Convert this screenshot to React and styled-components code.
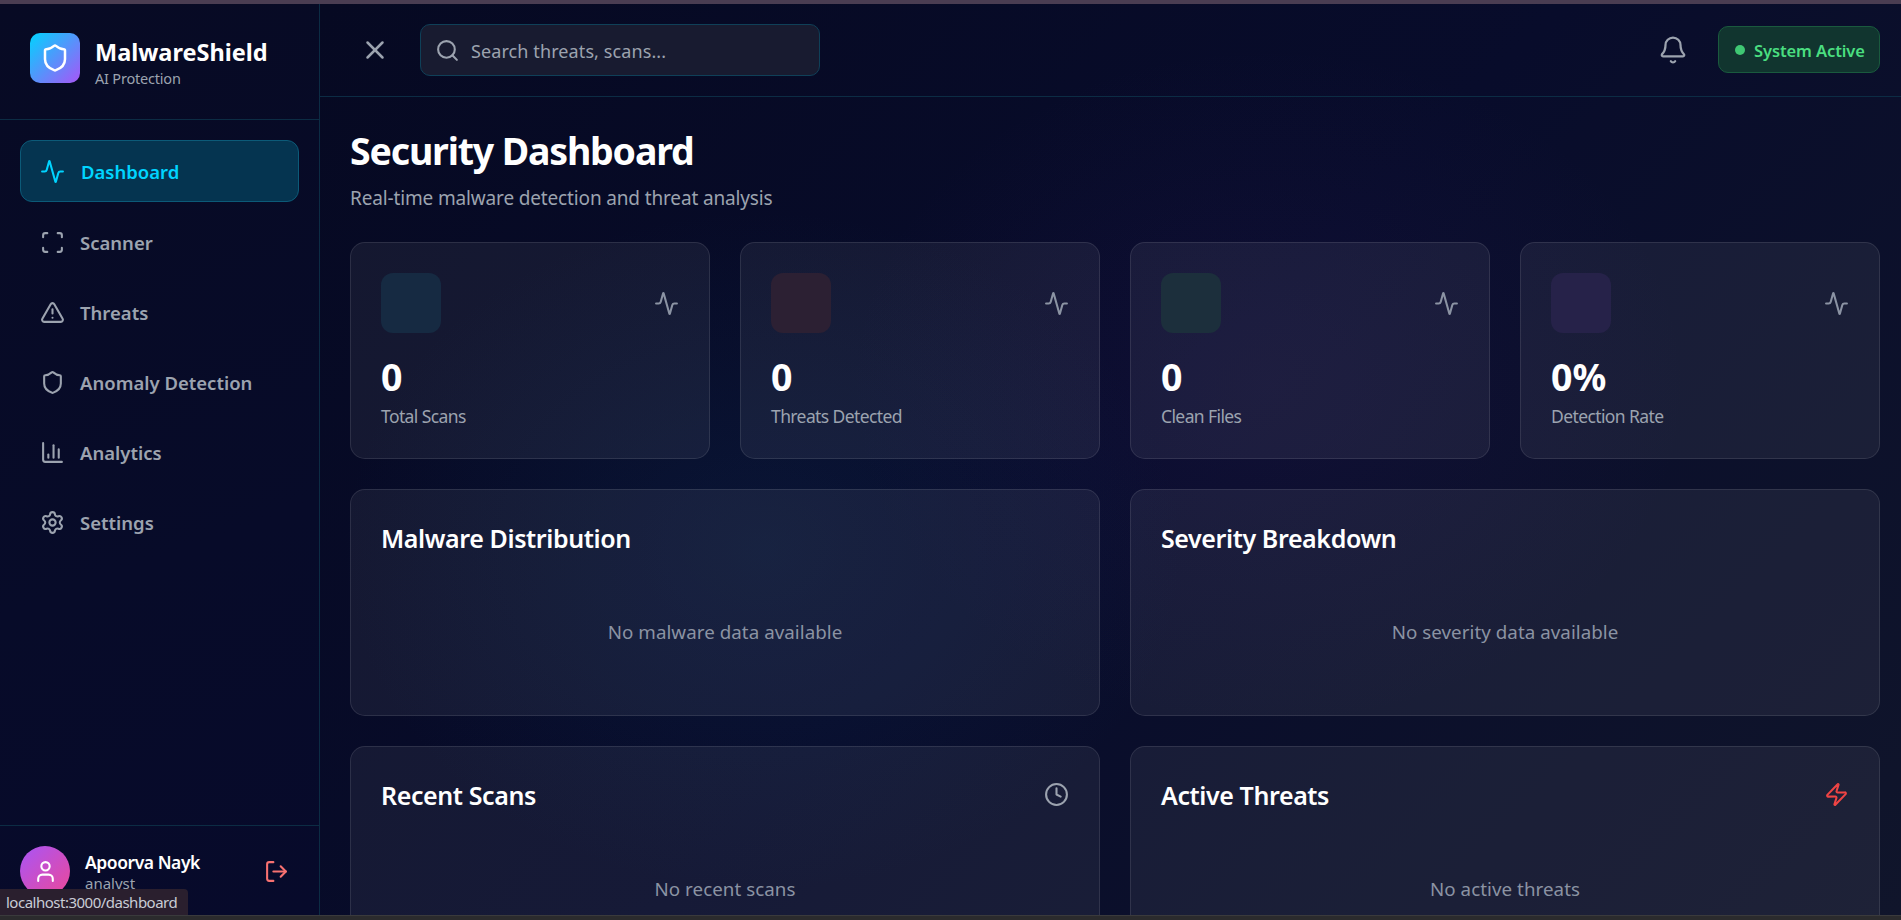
import React from "react";
import styled, { createGlobalStyle } from "styled-components";
import { Activity, Scan, TriangleAlert, Shield, ChartColumn, Settings, LogOut, User, Bell, Search, X, Clock, Zap } from "lucide-react";

const Global = createGlobalStyle`
  html, body { margin: 0; height: 100%; overflow: hidden; background: #060924; }
  body { font-family: "Noto Sans", "Open Sans", sans-serif; color: #fff; }
  * { box-sizing: border-box; }
`;
const Page = styled.div`
  position: relative; height: 920px; display: flex; flex-direction: column; overflow: hidden;
  background: #060924;
`;
const TopStrip = styled.div` height: 4px; flex: none; background: #4a3d52; `;
const BottomStrip = styled.div` height: 5px; flex: none; background: #2b2b2d; border-top: 1px solid #3a3a3c; `;
const Shell = styled.div` flex: 1; min-height: 0; display: flex; `;
const Sidebar = styled.aside`
  width: 320px; flex: none; display: flex; flex-direction: column;
  border-right: 1px solid #0c2c44;
  background: linear-gradient(160deg, #070a24 0%, #070b29 60%, #070a2b 100%);
`;
const Brand = styled.div`
  height: 116px; flex: none; display: flex; align-items: center; gap: 15px; padding: 0 30px 8px;
  border-bottom: 1px solid #0c2c44;
`;
const LogoTile = styled.div`
  width: 50px; height: 50px; border-radius: 10px; display: flex; align-items: center; justify-content: center;
  background: linear-gradient(135deg, #00d4ff 0%, #a855f7 100%);
`;
const BrandText = styled.div` padding-top: 11px; `;
const BrandName = styled.div` font-size: 23.5px; font-weight: 700; line-height: 30px; `;
const BrandSub = styled.div` font-size: 14.5px; line-height: 22px; color: #9ca3af; letter-spacing: -0.2px; `;
const Nav = styled.nav` flex: 1; padding: 20px; display: flex; flex-direction: column; gap: 8px; `;
const NavItem = styled.div`
  height: 62px; display: flex; align-items: center; gap: ${p => p.$active ? 16 : 15}px;
  padding: ${p => p.$active ? 0 : 3}px 19px 0;
  border-radius: 12px; border: 1px solid ${p => p.$active ? "#0c5a78" : "transparent"};
  background: ${p => p.$active ? "#053450" : "transparent"};
  color: ${p => p.$active ? "#00d4ff" : "#9ca3af"};
  font-size: 18.5px; font-weight: 600;
`;
const Footer = styled.div`
  height: 90px; flex: none; display: flex; align-items: flex-start; padding: 20px 20px 0; gap: 15px;
  border-top: 1px solid #0c2c44;
`;
const Avatar = styled.div`
  width: 50px; height: 50px; border-radius: 50%; flex: none; display: flex; align-items: center; justify-content: center;
  background: linear-gradient(135deg, #a855f7 0%, #ec4899 100%);
`;
const UserInfo = styled.div` flex: 1; `;
const UserName = styled.div` font-size: 17.5px; font-weight: 600; line-height: 22px; letter-spacing: -0.45px; margin-top: 5px; `;
const UserRole = styled.div` font-size: 15px; line-height: 21px; color: #9ca3af; `;
const LogoutBtn = styled.div` color: #f87171; margin: 13px 10px 0 0; display: flex; `;
const StatusTip = styled.div`
  position: absolute; left: 0; bottom: 5px; height: 26px; width: 188px; padding: 0 6px;
  display: flex; align-items: center; white-space: nowrap;
  background: #2a1f2e; border-top-right-radius: 4px; color: #c9ccd6; font-size: 15px; letter-spacing: -0.5px;
`;
const Main = styled.main`
  flex: 1; min-width: 0; display: flex; flex-direction: column;
  background:
    radial-gradient(ellipse 420px 340px at 28% 60%, rgba(18, 62, 105, .2), transparent 100%),
    radial-gradient(ellipse 420px 340px at 60% 42%, rgba(82, 42, 140, .1), transparent 100%),
    linear-gradient(135deg, #060922 0%, #080c2b 50%, #10152b 100%);
`;
const Topbar = styled.header`
  height: 93px; flex: none; display: flex; align-items: center; padding: 0 21px 1px 40px;
  border-bottom: 1px solid #0c2c44;
`;
const CloseBtn = styled.div` color: #9ca3af; display: flex; margin-right: 30px; `;
const SearchBox = styled.div`
  width: 400px; height: 52px; display: flex; align-items: center; gap: 11px; padding: 2px 14px 0;
  border: 1px solid #0f4058; border-radius: 10px; background: #181b30; color: #9ca3af;
  font-size: 18px; letter-spacing: 0.1px;
`;
const Spacer = styled.div` flex: 1; `;
const BellBtn = styled.div` color: #9ca3af; display: flex; margin-right: 30px; `;
const StatusBadge = styled.div`
  width: 162px; height: 47px; display: flex; align-items: center; gap: 9px; padding: 1px 0 0 16px;
  border: 1px solid #1a5a3e; border-radius: 10px; background: #11352f; color: #4ade80;
  font-size: 16.5px; font-weight: 600; letter-spacing: -0.1px;
`;
const Dot = styled.span` width: 10px; height: 10px; border-radius: 50%; background: #3fc873; `;
const Content = styled.div` flex: 1; min-height: 0; overflow: hidden; padding: 31px 21px 0 30px; `;
const Title = styled.h1` margin: 0; font-size: 37.5px; line-height: 46px; font-weight: 700; letter-spacing: -1.17px; `;
const Subtitle = styled.p` margin: 11px 0 0; font-size: 19px; line-height: 26px; color: #9ca3af; letter-spacing: -0.15px; `;
const StatGrid = styled.div` display: grid; grid-template-columns: repeat(4, 1fr); gap: 30px; margin: 31px 0 30px; `;
const cardBg = `
  border: 1px solid rgba(255,255,255,.1); border-radius: 15px;
  background: rgba(255,255,255,.06);
`;
const StatCard = styled.div` ${cardBg} height: 217px; padding: 30px; `;
const StatTop = styled.div` display: flex; justify-content: space-between; align-items: center; color: #8b93a3; margin-bottom: 20px; `;
const IconTile = styled.div` width: 60px; height: 60px; border-radius: 12px; background: ${p => p.$bg}; `;
const StatValue = styled.div` font-size: 37.5px; font-weight: 700; line-height: 48px; `;
const StatLabel = styled.div` font-size: 17.5px; line-height: 26px; color: #9ca3af; margin-top: 2px; letter-spacing: -0.6px; `;
const PanelGrid = styled.div` display: grid; grid-template-columns: 1fr 1fr; gap: 30px; `;
const Panel = styled.section` ${cardBg} height: 227px; padding: 30px; `;
const PanelHead = styled.div` display: flex; justify-content: space-between; align-items: center; height: 35px; margin-bottom: 24px; `;
const PanelTitle = styled.h2` margin: 0; font-size: 25px; font-weight: 600; letter-spacing: -0.4px; `;
const PanelIcon = styled.div` display: flex; color: ${p => p.$c}; `;
const Empty = styled.div`
  height: 105px; display: flex; align-items: center; justify-content: center;
  color: #8b93a3; font-size: 18.75px; letter-spacing: 0.05px;
`;

const nav = [
  [Activity, "Dashboard", true], [Scan, "Scanner"], [TriangleAlert, "Threats"],
  [Shield, "Anomaly Detection"], [ChartColumn, "Analytics"], [Settings, "Settings"],
];
const stats = [
  ["0", "Total Scans", "#162a42"], ["0", "Threats Detected", "#2c2033"],
  ["0", "Clean Files", "#1c2f3c"], ["0%", "Detection Rate", "#262249"],
];
const panels = [
  ["Malware Distribution", "No malware data available"],
  ["Severity Breakdown", "No severity data available"],
  ["Recent Scans", "No recent scans", Clock, "#9ca3af"],
  ["Active Threats", "No active threats", Zap, "#ef4444"],
];

export default function App() {
  return (
    <Page>
      <Global />
      <TopStrip />
      <Shell>
        <Sidebar>
          <Brand>
            <LogoTile><Shield size={30} color="#fff" strokeWidth={2} /></LogoTile>
            <BrandText>
              <BrandName>MalwareShield</BrandName>
              <BrandSub>AI Protection</BrandSub>
            </BrandText>
          </Brand>
          <Nav>
            {nav.map(([I, label, active]) => (
              <NavItem key={label} $active={active}><I size={25} strokeWidth={2} />{label}</NavItem>
            ))}
          </Nav>
          <Footer>
            <Avatar><User size={25} color="#fff" /></Avatar>
            <UserInfo>
              <UserName>Apoorva Nayk</UserName>
              <UserRole>analyst</UserRole>
            </UserInfo>
            <LogoutBtn><LogOut size={25} /></LogoutBtn>
          </Footer>
        </Sidebar>
        <Main>
          <Topbar>
            <CloseBtn><X size={30} strokeWidth={2} /></CloseBtn>
            <SearchBox><Search size={25} />Search threats, scans...</SearchBox>
            <Spacer />
            <BellBtn><Bell size={30} strokeWidth={1.8} /></BellBtn>
            <StatusBadge><Dot />System Active</StatusBadge>
          </Topbar>
          <Content>
            <Title>Security Dashboard</Title>
            <Subtitle>Real-time malware detection and threat analysis</Subtitle>
            <StatGrid>
              {stats.map(([v, l, bg]) => (
                <StatCard key={l}>
                  <StatTop><IconTile $bg={bg} /><Activity size={25} /></StatTop>
                  <StatValue>{v}</StatValue>
                  <StatLabel>{l}</StatLabel>
                </StatCard>
              ))}
            </StatGrid>
            <PanelGrid>
              {panels.map(([t, e, I, c]) => (
                <Panel key={t}>
                  <PanelHead>
                    <PanelTitle>{t}</PanelTitle>
                    {I && <PanelIcon $c={c}><I size={25} /></PanelIcon>}
                  </PanelHead>
                  <Empty>{e}</Empty>
                </Panel>
              ))}
            </PanelGrid>
          </Content>
        </Main>
      </Shell>
      <BottomStrip />
      <StatusTip>localhost:3000/dashboard</StatusTip>
    </Page>
  );
}
